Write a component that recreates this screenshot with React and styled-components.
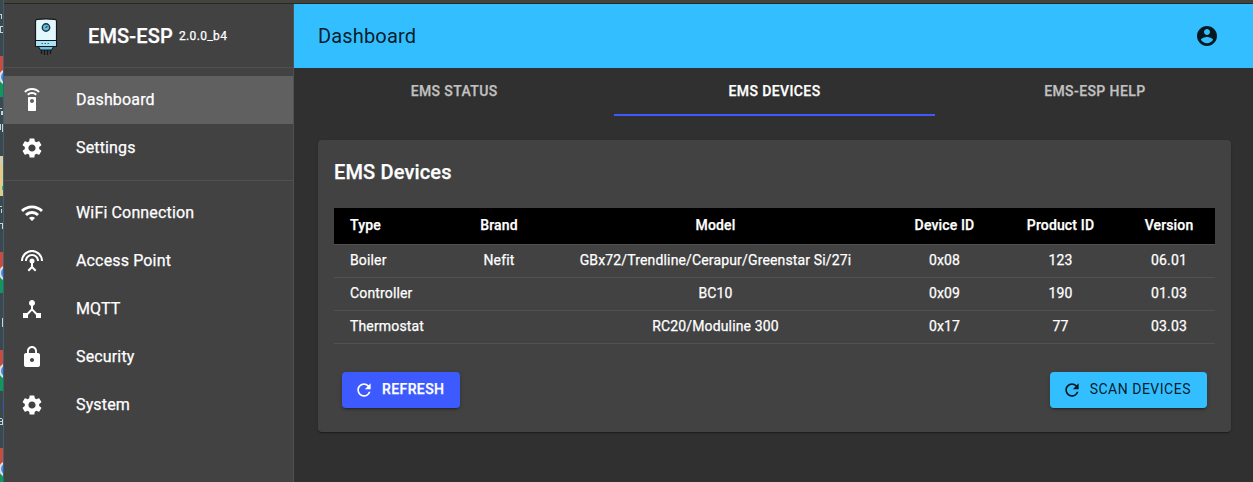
import React from "react";
import styled, { createGlobalStyle, css } from "styled-components";
import {
  MdSettingsRemote,
  MdSettings,
  MdWifi,
  MdSettingsInputAntenna,
  MdDeviceHub,
  MdLock,
  MdRefresh,
} from "react-icons/md";

const line = "#515151";

const GlobalStyle = createGlobalStyle`
  *, *::before, *::after { box-sizing: border-box; }
  body {
    margin: 0;
    overflow: hidden;
    background: #303030;
    color: #fff;
    font-family: Roboto, "Liberation Sans", sans-serif;
    font-size: 14px;
    letter-spacing: 0.01071em;
    -webkit-text-stroke: 0.25px currentColor;
  }
`;

const Screen = styled.div`
  display: flex;
  width: 1253px;
  height: 482px;
  overflow: hidden;
`;

const DesktopEdge = styled.svg`
  flex: none;
  display: block;
  width: 4px;
  height: 482px;
`;

const Window = styled.div`
  flex: none;
  display: flex;
  width: 1251px;
  border-top: 4px solid transparent;
  background: linear-gradient(#43443c 3px, #282828 3px) 0 0 / 100% 4px no-repeat border-box, #303030;
`;

const Sidebar = styled.aside`
  flex: none;
  width: 290px;
  background: #424242;
  border-right: 1px solid ${line};
`;

const Brand = styled.div`
  display: flex;
  align-items: center;
  height: 64px;
  padding: 0 24px;
  border-bottom: 1px solid ${line};
`;

const Logo = styled.svg`
  flex: none;
  width: 36px;
  height: 38px;
  margin-right: 24px;
`;

const BrandName = styled.h6`
  margin: 0;
  font-size: 20px;
  font-weight: 500;
  letter-spacing: 0.0075em;
`;

const Version = styled.span`
  margin-left: 6px;
  font-size: 12px;
  letter-spacing: 0.03em;
`;

const NavGroup = styled.nav`
  padding: 8px 0;
  & + & {
    border-top: 1px solid ${line};
  }
`;

const NavItem = styled.a`
  display: flex;
  align-items: center;
  height: 48px;
  padding: 0 16px;
  font-size: 16px;
  letter-spacing: 0.00938em;
  background: ${(p) => (p.$selected ? "#606060" : "transparent")};
  svg {
    width: 24px;
    height: 24px;
    margin-right: 32px;
    stroke-width: 0;
  }
`;

const Label = styled.span`
  padding-bottom: 2px;
`;

const Main = styled.main`
  flex: 1;
  display: flex;
  flex-direction: column;
`;

const AppBar = styled.header`
  display: flex;
  align-items: center;
  justify-content: space-between;
  height: 64px;
  padding: 0 36px 0 24px;
  background: #33bfff;
  color: rgba(0, 0, 0, 0.87);
  -webkit-text-stroke: 0;
`;

const PageTitle = styled.h1`
  margin: 0;
  font-size: 20px;
  font-weight: 400;
  letter-spacing: 0.0075em;
`;

const AccountIcon = styled.svg`
  width: 24px;
  height: 24px;
`;

const TabBar = styled.div`
  display: flex;
  height: 48px;
`;

const Tab = styled.div`
  flex: 1;
  display: flex;
  align-items: center;
  justify-content: center;
  font-weight: 500;
  letter-spacing: 0.02857em;
  color: #c1c1c1;
  border-bottom: 2px solid transparent;
  ${(p) =>
    p.$active &&
    css`
      color: #fff;
      border-bottom-color: #3d5afe;
    `}
`;

const Card = styled.section`
  margin: 24px;
  padding: 16px;
  border-radius: 4px;
  background: #424242;
  box-shadow: 0 2px 1px -1px rgba(0, 0, 0, 0.2), 0 1px 1px rgba(0, 0, 0, 0.14),
    0 1px 3px rgba(0, 0, 0, 0.12);
`;

const CardTitle = styled.h2`
  margin: 0 0 20px;
  font-size: 20px;
  line-height: 32px;
  font-weight: 500;
  letter-spacing: 0.0075em;
`;

const Table = styled.table`
  width: 881px;
  table-layout: fixed;
  border-collapse: separate;
  border-spacing: 0;
`;

const Cell = styled.td`
  height: 33px;
  padding: 0 0 2px;
  line-height: 20px;
  text-align: center;
  border-bottom: 1px solid ${line};
  &:first-child {
    padding-left: 16px;
    text-align: left;
  }
  &:last-child {
    padding-left: 20px;
  }
`;

const HeadCell = styled(Cell)`
  height: 37px;
  font-weight: 500;
  background: #000 padding-box;
`;

const Actions = styled.div`
  display: flex;
  justify-content: space-between;
  margin-top: 20px;
  padding: 8px;
`;

const Button = styled.button`
  display: flex;
  align-items: center;
  height: 36px;
  padding: 0 16px 0 12px;
  border: 0;
  border-radius: 4px;
  font: ${(p) => (p.$primary ? 500 : 400)} 14px Roboto, "Liberation Sans", sans-serif;
  letter-spacing: ${(p) => (p.$primary ? "0.02857em" : "0.0362em")};
  color: ${(p) => (p.$primary ? "#fff" : "rgba(0, 0, 0, 0.87)")};
  -webkit-text-stroke: ${(p) => (p.$primary ? "0.25px currentColor" : "0")};
  background: ${(p) => (p.$primary ? "#3d5afe" : "#33bfff")};
  box-shadow: 0 3px 1px -2px rgba(0, 0, 0, 0.2), 0 2px 2px rgba(0, 0, 0, 0.14),
    0 1px 5px rgba(0, 0, 0, 0.12);
  svg {
    width: 20px;
    height: 20px;
    margin-right: 8px;
  }
`;

const columns = [
  ["Type", 104],
  ["Brand", 122],
  ["Model", 311],
  ["Device ID", 147],
  ["Product ID", 85],
  ["Version", 112],
];

const devices = [
  ["Boiler", "Nefit", "GBx72/Trendline/Cerapur/Greenstar Si/27i", "0x08", "123", "06.01"],
  ["Controller", "", "BC10", "0x09", "190", "01.03"],
  ["Thermostat", "", "RC20/Moduline 300", "0x17", "77", "03.03"],
];

const browserShortcuts = [56, 252, 350, 448];

function Edge() {
  return (
    <DesktopEdge viewBox="0 0 4 482" aria-hidden="true">
      <rect width="4" height="482" fill="#3f474b" />
      {browserShortcuts.map((y) => (
        <g key={y}>
          <rect y={y} width="3" height="22" fill="#cc4b3f" />
          <rect y={y + 21} width="3" height="20" fill="#10975a" />
          <circle cx="7" cy={y + 21} r="8" fill="#dedede" />
          <circle cx="7" cy={y + 21} r="6" fill="#4285f4" />
        </g>
      ))}
      <rect y="156" width="3" height="40" fill="#e2cb82" />
      <rect y="158" width="3" height="5" fill="#d2cdbb" />
      <rect x="2" y="186" width="1" height="4" fill="#19b89b" />
      <g fill="#c9d5cf">
        <rect y="14" width="2" height="1" />
        <rect x="1" y="15" width="1" height="4" />
        <rect y="26" width="1" height="7" />
        <rect x="1" y="26" width="2" height="1" />
        <rect x="1" y="32" width="2" height="1" />
        <rect y="108" width="2" height="1" />
        <rect x="1" y="111" width="2" height="4" />
        <rect y="124" width="1" height="6" />
        <rect x="2" y="124" width="1" height="8" />
        <rect y="206" width="2" height="1" />
        <rect x="1" y="209" width="1" height="4" />
        <rect y="223" width="2" height="1" />
        <rect x="2" y="223" width="1" height="6" />
        <rect x="2" y="318" width="1" height="9" />
        <rect y="418" width="2" height="1" />
        <rect x="2" y="419" width="1" height="6" />
        <rect y="421" width="2" height="1" />
        <rect y="424" width="2" height="1" />
      </g>
      <rect x="2" y="402" width="1" height="8" fill="#3f3f91" />
      <rect x="3" width="1" height="482" fill="#38617b" />
    </DesktopEdge>
  );
}

function BoilerLogo() {
  return (
    <Logo viewBox="0 0 36 38" aria-hidden="true">
      <path d="M13.500 32v5M16.500 32v6M19.500 32v6M22.500 32v5" stroke="#15191b" strokeWidth="1.300" />
      <path d="M10 29h16l-2.500 4h-11z" fill="#65bfe0" stroke="#15191b" />
      <path d="M7.500 4Q7.500 2.700 9.500 2.400Q18 1.400 26.500 2.400Q28.500 2.700 28.500 4V29.500H7.500z" fill="#e2f8fd" stroke="#15191b" strokeWidth="1.200" />
      <path d="M8 23.500h20V29H8z" fill="#a9e2f5" />
      <path d="M7.500 23.500h21" stroke="#15191b" />
      <path d="M13.500 26.500h9" stroke="#3c6472" strokeDasharray="1.500 1.500" />
      <circle cx="18" cy="10.500" r="3.700" fill="#62bddd" stroke="#1c3440" strokeWidth="1.400" />
      <path d="M17.500 11l2-2" stroke="#15191b" />
    </Logo>
  );
}

export default function App() {
  return (
    <>
      <GlobalStyle />
      <Screen>
        <Edge />
        <Window>
          <Sidebar>
            <Brand>
              <BoilerLogo />
              <BrandName>EMS-ESP</BrandName>
              <Version>2.0.0_b4</Version>
            </Brand>
            <NavGroup>
              <NavItem $selected><MdSettingsRemote /><Label>Dashboard</Label></NavItem>
              <NavItem><MdSettings /><Label>Settings</Label></NavItem>
            </NavGroup>
            <NavGroup>
              <NavItem><MdWifi /><Label>WiFi Connection</Label></NavItem>
              <NavItem><MdSettingsInputAntenna /><Label>Access Point</Label></NavItem>
              <NavItem><MdDeviceHub /><Label>MQTT</Label></NavItem>
              <NavItem><MdLock /><Label>Security</Label></NavItem>
              <NavItem><MdSettings /><Label>System</Label></NavItem>
            </NavGroup>
          </Sidebar>
          <Main>
            <AppBar>
              <PageTitle>Dashboard</PageTitle>
              <AccountIcon viewBox="0 0 24 24" fill="currentColor">
                <path d="M12 2C6.480 2 2 6.480 2 12s4.480 10 10 10 10-4.480 10-10S17.520 2 12 2zm0 3c1.660 0 3 1.340 3 3s-1.340 3-3 3-3-1.340-3-3 1.340-3 3-3zm0 14.200c-2.500 0-4.710-1.280-6-3.220.03-1.990 4-3.080 6-3.080 1.990 0 5.970 1.090 6 3.080-1.290 1.940-3.500 3.220-6 3.220z" />
              </AccountIcon>
            </AppBar>
            <TabBar>
              <Tab>EMS STATUS</Tab>
              <Tab $active>EMS DEVICES</Tab>
              <Tab>EMS-ESP HELP</Tab>
            </TabBar>
            <Card>
              <CardTitle>EMS Devices</CardTitle>
              <Table>
                <colgroup>
                  {columns.map(([name, width]) => (
                    <col key={name} width={width} />
                  ))}
                </colgroup>
                <thead>
                  <tr>
                    {columns.map(([name]) => (
                      <HeadCell as="th" key={name}>{name}</HeadCell>
                    ))}
                  </tr>
                </thead>
                <tbody>
                  {devices.map((row) => (
                    <tr key={row[0]}>
                      {row.map((value, i) => (
                        <Cell key={i}>{value}</Cell>
                      ))}
                    </tr>
                  ))}
                </tbody>
              </Table>
              <Actions>
                <Button $primary><MdRefresh /><Label>REFRESH</Label></Button>
                <Button><MdRefresh /><Label>SCAN DEVICES</Label></Button>
              </Actions>
            </Card>
          </Main>
        </Window>
      </Screen>
    </>
  );
}
